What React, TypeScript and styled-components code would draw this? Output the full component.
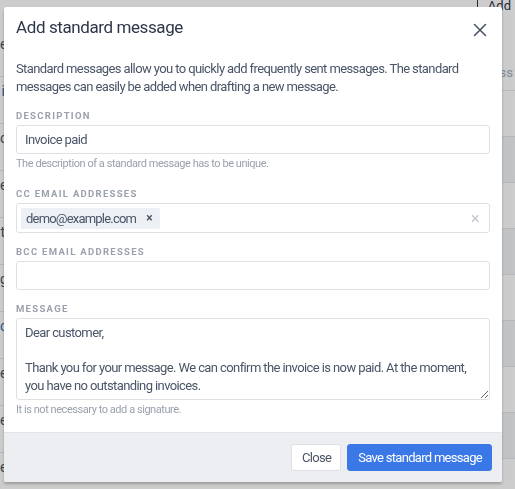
import styled, { createGlobalStyle } from 'styled-components'

const GlobalStyle = createGlobalStyle`
  html, body { margin: 0; padding: 0; }
  body {
    font-family: Roboto, "Liberation Sans", sans-serif;
    background: #ffffff;
    width: 515px;
    height: 489px;
    overflow: hidden;
  }
`

/* page behind the dialog */
const Page = styled.div`
  display: grid;
  grid-template-columns: 5px 1fr;
  height: 489px;
  overflow: hidden;
  font-size: 14px;
`

const SideList = styled.div`
  display: flex;
  flex-direction: column;
  padding-top: 30px;
  overflow: hidden;
`

const SideItem = styled.div<{ $link?: boolean }>`
  height: 40px;
  border-bottom: 1px solid #e2e8f0;
  padding-top: 6px;
  line-height: 16px;
  color: ${({ $link }) => ($link ? '#2b6cb0' : '#4a5568')};
  text-align: right;
`

const TableArea = styled.div`
  display: flex;
  flex-direction: column;
`

const TopBar = styled.div`
  display: flex;
  justify-content: flex-end;
  height: 56px;
`

const AddButton = styled.div`
  border-left: 1px solid #2d3748;
  padding: 0 4px 0 10px;
  height: 12px;
  line-height: 12px;
  font-size: 13px;
  color: #2d3748;
`

const HeadRow = styled.div`
  height: 34px;
  line-height: 34px;
  text-align: right;
  padding-right: 2px;
  color: #a0aec0;
  font-size: 13px;
`

const Row = styled.div<{ $shade?: boolean }>`
  height: 45px;
  border-top: 1px solid #e2e8f0;
  background: ${({ $shade }) => ($shade ? '#f3f4f6' : '#ffffff')};
`

const Overlay = styled.div`
  position: fixed;
  inset: 0;
  background: rgba(0, 0, 0, 0.2);
  display: flex;
  align-items: flex-start;
  padding: 7px 13px 0 4px;
`

const Modal = styled.div`
  width: 498px;
  background: #ffffff;
  border-radius: 2px;
  box-shadow: 0 2px 3px rgba(0, 0, 0, 0.25);
  display: flex;
  flex-direction: column;
  overflow: hidden;
  letter-spacing: -0.6px;
`

const Header = styled.div`
  display: flex;
  align-items: flex-start;
  justify-content: space-between;
  padding: 9px 12px 0;
`

const Title = styled.h2`
  margin: 0;
  font-size: 17px;
  line-height: 22px;
  font-weight: 400;
  letter-spacing: -0.4px;
  color: #2d3748;
`

const CloseIcon = styled.button`
  box-sizing: border-box;
  border: 0;
  background: none;
  padding: 0 0 1px;
  width: 16px;
  height: 22px;
  margin-right: 2px;
  color: #4a5568;
  display: flex;
  align-items: flex-end;
  justify-content: center;
`

const Body = styled.div`
  padding: 22px 12px 14px;
`

const Intro = styled.p`
  margin: 0 0 14px;
  font-size: 13px;
  line-height: 18px;
  color: #4a5568;
`

const Field = styled.div`
  display: flex;
  flex-direction: column;
  margin-bottom: 13px;
  &:last-child { margin-bottom: 0; }
`

const Label = styled.div`
  font-size: 9.5px;
  line-height: 12px;
  font-weight: 700;
  letter-spacing: 1.3px;
  color: #9aa0ac;
  margin-bottom: 3px;
`

const Input = styled.input`
  box-sizing: border-box;
  width: 100%;
  height: 29px;
  border: 1px solid #dde1e6;
  border-radius: 3px;
  padding: 0 8px;
  font-family: inherit;
  font-size: 13px;
  letter-spacing: -0.6px;
  color: #4a5568;
  outline: none;
  display: block;
`

const TagBox = styled.div`
  box-sizing: border-box;
  height: 30px;
  border: 1px solid #dde1e6;
  border-radius: 3px;
  padding: 3px 10px 3px 4px;
  display: flex;
  align-items: center;
`

const Tag = styled.span`
  display: inline-flex;
  align-items: center;
  gap: 10px;
  height: 21px;
  padding: 0 8px 0 5px;
  background: #edf0f4;
  border-radius: 2px;
  font-size: 13px;
  letter-spacing: -0.8px;
  color: #4a5568;
`

const TagRemove = styled.span`
  font-size: 12px;
  font-weight: 700;
  color: #4a5568;
`

const ClearAll = styled.span`
  margin-left: auto;
  color: #c3c7ce;
  font-size: 16px;
`

const TextArea = styled.textarea`
  box-sizing: border-box;
  width: 100%;
  height: 82px;
  border: 1px solid #dde1e6;
  border-radius: 3px;
  padding: 5px 20px 5px 8px;
  font-family: inherit;
  font-size: 13px;
  line-height: 17.5px;
  letter-spacing: -0.6px;
  color: #4a5568;
  outline: none;
  display: block;
  resize: vertical;
`

const Help = styled.div<{ $last?: boolean }>`
  margin: 2px 0 ${({ $last }) => ($last ? '0' : '3px')};
  font-size: 11px;
  line-height: 16px;
  letter-spacing: -0.45px;
  color: #9aa0ac;
`

const Footer = styled.div`
  display: flex;
  justify-content: flex-end;
  gap: 6px;
  padding: 11px 10px 11px;
  background: #edeef2;
  border-top: 1px solid #e2e4e9;
`

const Button = styled.button<{ $primary?: boolean }>`
  height: 27px;
  padding: 0 9px 0 10px;
  border-radius: 3px;
  font-family: inherit;
  font-size: 13px;
  letter-spacing: -0.7px;
  border: 1px solid ${({ $primary }) => ($primary ? '#3b78e7' : '#dde1e6')};
  background: ${({ $primary }) => ($primary ? '#3b78e7' : '#ffffff')};
  color: ${({ $primary }) => ($primary ? '#ffffff' : '#4a5568')};
`

const sideLetters = ['e', 'i', 'o', 'e', 't', 'g', 'c', 'e', 'e', 'e']
const rows = [false, true, false, true, false, true, false, true, false]

export default function App() {
  return (
    <>
      <GlobalStyle />
      <Page>
        <SideList>
          {sideLetters.map((t, i) => (
            <SideItem key={i} $link={i === 1 || i === 6}>{t}</SideItem>
          ))}
        </SideList>
        <TableArea>
          <TopBar>
            <AddButton>Add</AddButton>
          </TopBar>
          <HeadRow>ss</HeadRow>
          {rows.map((s, i) => (
            <Row key={i} $shade={s} />
          ))}
        </TableArea>
      </Page>

      <Overlay>
        <Modal>
          <Header>
            <Title>Add standard message</Title>
            <CloseIcon aria-label="Close">
              <svg width="14" height="14" viewBox="0 0 14 14" fill="none" stroke="currentColor" strokeWidth="1.6" strokeLinecap="round">
                <path d="M1.5 1.5l11 11M12.5 1.5l-11 11" />
              </svg>
            </CloseIcon>
          </Header>

          <Body>
            <Intro>
              Standard messages allow you to quickly add frequently sent messages. The standard
              messages can easily be added when drafting a new message.
            </Intro>

            <Field>
              <Label>DESCRIPTION</Label>
              <Input defaultValue="Invoice paid" />
              <Help>The description of a standard message has to be unique.</Help>
            </Field>

            <Field>
              <Label>CC EMAIL ADDRESSES</Label>
              <TagBox>
                <Tag>
                  demo@example.com
                  <TagRemove>×</TagRemove>
                </Tag>
                <ClearAll>×</ClearAll>
              </TagBox>
            </Field>

            <Field>
              <Label>BCC EMAIL ADDRESSES</Label>
              <Input defaultValue="" />
            </Field>

            <Field>
              <Label>MESSAGE</Label>
              <TextArea
                defaultValue={
                  'Dear customer,\n\nThank you for your message. We can confirm the invoice is now paid. At the moment, you have no outstanding invoices.'
                }
              />
              <Help $last>It is not necessary to add a signature.</Help>
            </Field>
          </Body>

          <Footer>
            <Button>Close</Button>
            <Button $primary>Save standard message</Button>
          </Footer>
        </Modal>
      </Overlay>
    </>
  )
}
